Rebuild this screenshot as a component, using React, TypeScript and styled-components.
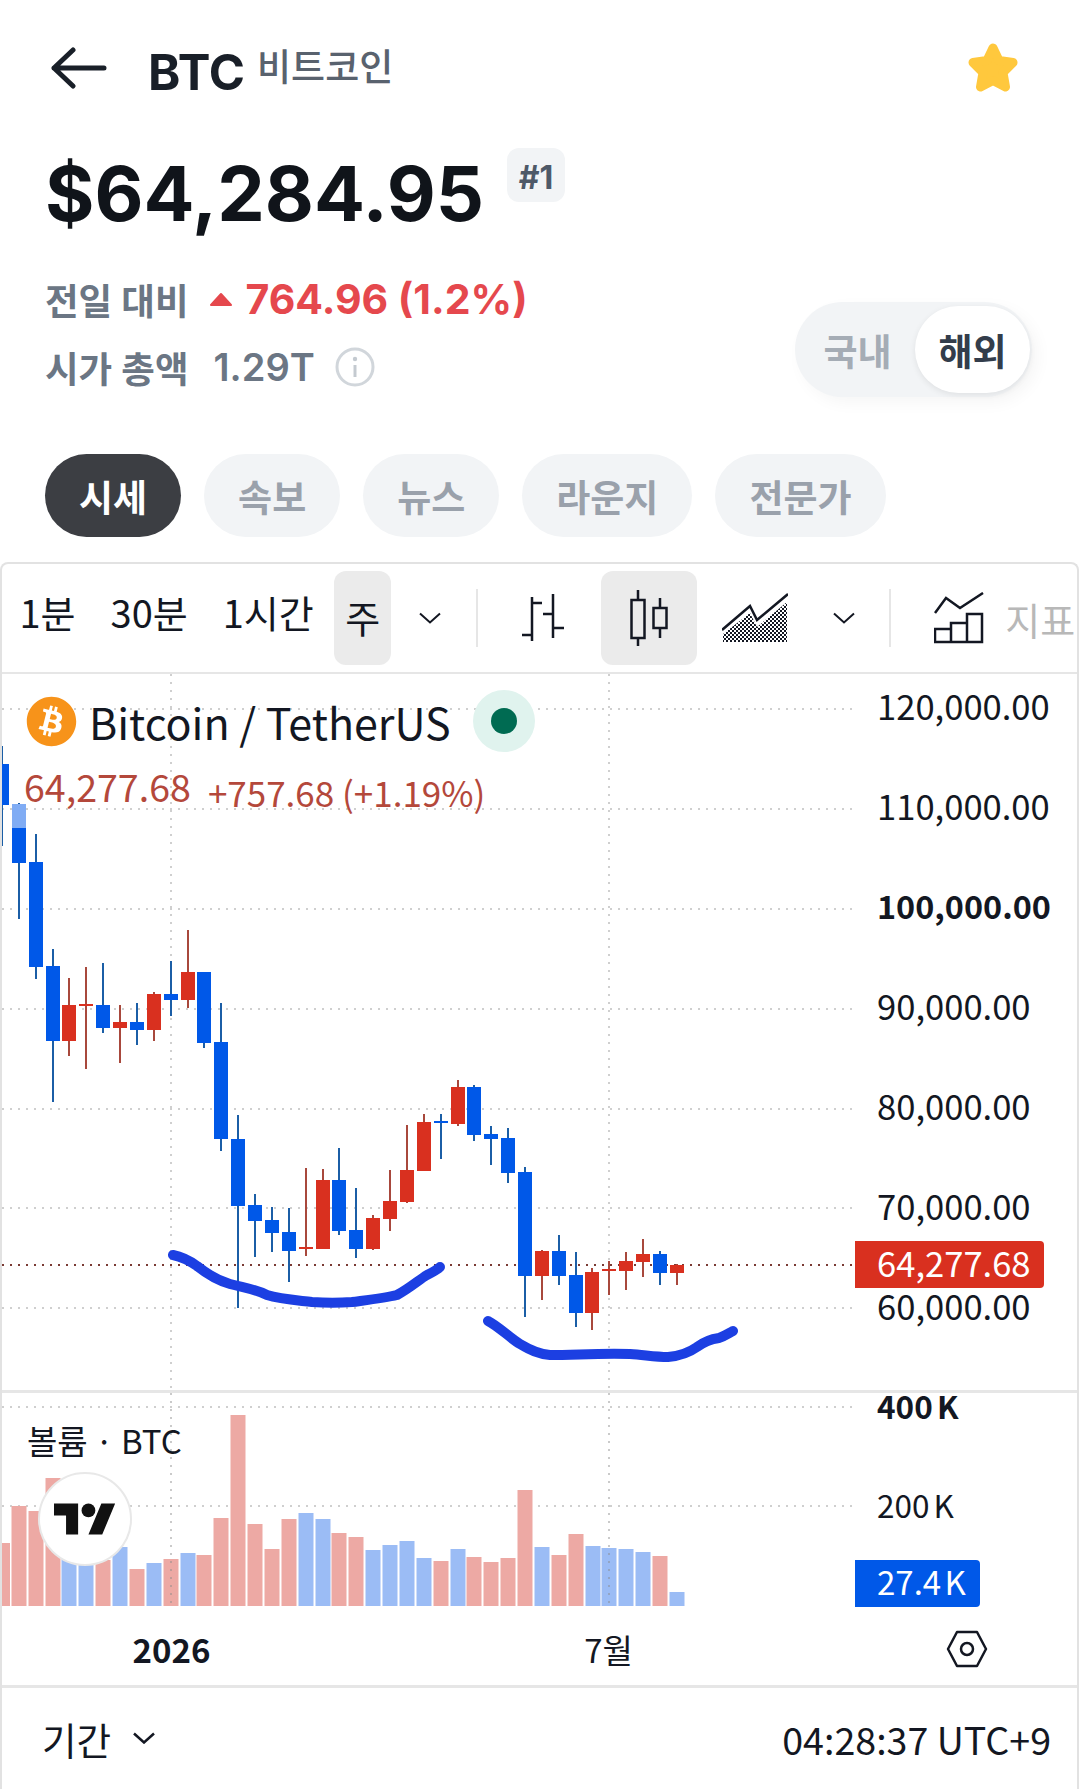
import React from 'react'
import styled, { createGlobalStyle } from 'styled-components'
import { FaBitcoin } from 'react-icons/fa'

const BLUE = '#0058e8'
const RED = '#d9301f'
const BLUE_WICK = '#1b5ea6'
const RED_WICK = '#a8483c'
const GRID = '#cfcfcf'

type Candle = [number, number, number, number, number, 'u' | 'd']

// x, high, body top, body bottom, low, direction
const candles: Candle[] = [
  [2, 746, 764, 805, 846, 'd'],
  [19, 803, 804, 863, 919, 'd'],
  [36, 834, 862, 967, 979, 'd'],
  [53, 949, 966, 1041, 1102, 'd'],
  [69, 978, 1005, 1041, 1056, 'u'],
  [86, 967, 1004, 1006, 1069, 'u'],
  [103, 963, 1005, 1028, 1033, 'd'],
  [120, 1005, 1022, 1028, 1063, 'u'],
  [137, 1003, 1022, 1030, 1045, 'd'],
  [154, 992, 994, 1030, 1041, 'u'],
  [171, 961, 994, 1000, 1016, 'd'],
  [188, 930, 972, 1000, 1008, 'u'],
  [204, 972, 972, 1043, 1048, 'd'],
  [221, 1003, 1042, 1139, 1151, 'd'],
  [238, 1115, 1139, 1206, 1308, 'd'],
  [255, 1194, 1205, 1221, 1257, 'd'],
  [272, 1207, 1220, 1233, 1252, 'd'],
  [289, 1208, 1232, 1251, 1282, 'd'],
  [306, 1168, 1247, 1249, 1256, 'u'],
  [323, 1169, 1180, 1249, 1249, 'u'],
  [339, 1148, 1180, 1231, 1235, 'd'],
  [356, 1188, 1230, 1249, 1258, 'd'],
  [373, 1215, 1218, 1249, 1250, 'u'],
  [390, 1170, 1201, 1219, 1231, 'u'],
  [407, 1125, 1170, 1202, 1203, 'u'],
  [424, 1114, 1122, 1171, 1171, 'u'],
  [441, 1114, 1121, 1123, 1159, 'd'],
  [458, 1080, 1087, 1124, 1126, 'u'],
  [474, 1085, 1087, 1135, 1141, 'd'],
  [491, 1126, 1134, 1139, 1165, 'd'],
  [508, 1128, 1138, 1173, 1183, 'd'],
  [525, 1167, 1172, 1276, 1317, 'd'],
  [542, 1250, 1251, 1276, 1300, 'u'],
  [559, 1235, 1251, 1276, 1285, 'd'],
  [576, 1252, 1275, 1313, 1327, 'd'],
  [592, 1268, 1272, 1313, 1330, 'u'],
  [609, 1261, 1269, 1271, 1295, 'u'],
  [626, 1252, 1261, 1271, 1290, 'u'],
  [643, 1239, 1254, 1262, 1277, 'u'],
  [660, 1251, 1254, 1273, 1285, 'd'],
  [677, 1264, 1265, 1273, 1285, 'u'],
]

// x, top of bar, direction
const volumes: [number, number, 'u' | 'd'][] = [
  [2.5, 1543, 'u'], [19, 1506, 'u'], [36, 1511, 'u'], [53, 1478, 'u'], [69, 1545, 'd'],
  [86, 1565, 'd'], [103, 1560, 'u'], [120, 1547, 'd'], [137, 1569, 'u'], [154, 1563, 'd'],
  [171, 1559, 'u'], [188, 1553, 'd'], [204, 1555, 'u'], [221, 1518, 'u'], [238, 1415, 'u'],
  [255, 1524, 'u'], [272, 1549, 'u'], [289, 1519, 'u'], [306, 1513, 'd'], [323, 1519, 'd'],
  [339, 1533, 'u'], [356, 1537, 'u'], [373, 1550, 'd'], [390, 1545, 'd'], [407, 1541, 'd'],
  [424, 1558, 'd'], [441, 1561, 'u'], [458, 1549, 'd'], [474, 1557, 'u'], [491, 1562, 'u'],
  [508, 1558, 'u'], [525, 1490, 'u'], [542, 1547, 'd'], [559, 1555, 'u'], [576, 1534, 'u'],
  [593, 1546, 'd'], [609, 1548, 'd'], [626, 1549, 'd'], [643, 1552, 'd'], [660, 1556, 'u'],
  [677, 1592, 'd'],
]

const priceTicks = ['120,000.00', '110,000.00', '100,000.00', '90,000.00', '80,000.00', '70,000.00', '60,000.00']

const GlobalStyle = createGlobalStyle`
  html, body {
    margin: 0;
    background: #fff;
  }
  body {
    font-family: Inter, "Noto Sans CJK KR", sans-serif;
    color: #191f28;
    overflow: hidden;
  }
`

const Page = styled.div`
  width: 1079px;
  height: 1789px;
  overflow: hidden;
`

const Header = styled.header`
  display: flex;
  align-items: center;
  height: 136px;
  padding: 0 60px 0 51px;
`

const Symbol = styled.span`
  margin-left: 41px;
  font-size: 49px;
  font-weight: 700;
  padding-top: 9px;
`

const CoinName = styled.span`
  margin-left: 12px;
  font-size: 37px;
  font-weight: 500;
  color: #59626e;
  padding-bottom: 6px;
`

const StarButton = styled.div`
  margin-left: auto;
  display: flex;
`

const PriceRow = styled.div`
  display: flex;
  align-items: flex-start;
  height: 100px;
  padding: 14px 0 0 45px;
  box-sizing: border-box;
`

const Price = styled.div`
  font-size: 75.5px;
  line-height: 88px;
  font-weight: 700;
  color: #10141a;
`

const RankBadge = styled.div`
  margin-left: 23px;
  margin-top: -2px;
  width: 58px;
  height: 54px;
  box-sizing: border-box;
  padding-top: 4px;
  border-radius: 12px;
  background: #f2f4f6;
  color: #4e5968;
  font-size: 32px;
  font-weight: 700;
  display: flex;
  align-items: center;
  justify-content: center;
`

const StatsRow = styled.div`
  display: flex;
  justify-content: space-between;
  align-items: flex-end;
  padding: 33px 47px 0 45px;
`

const Stats = styled.div`
  display: flex;
  flex-direction: column;
  gap: 8px;
`

const StatLine = styled.div`
  display: flex;
  align-items: center;
  height: 60px;
  font-size: 36.5px;
  font-weight: 600;
  color: #6b7684;
`

const Change = styled.span`
  margin-left: 13px;
  font-size: 41px;
  font-weight: 700;
  color: #e5484d;
`

const Cap = styled.span`
  margin-left: 25px;
  font-size: 38px;
  font-weight: 600;
`

const MarketToggle = styled.div`
  width: 237px;
  height: 95px;
  box-sizing: border-box;
  padding: 4px 2px 4px 5px;
  border-radius: 48px;
  background: #f2f4f6;
  box-shadow: 6px 6px 16px rgba(0, 0, 0, 0.04);
  display: flex;
  justify-content: space-between;
  align-items: center;
`

const ToggleOption = styled.div<{ $active?: boolean }>`
  width: 115px;
  height: 87px;
  border-radius: 44px;
  font-size: 37px;
  font-weight: 700;
  display: flex;
  align-items: center;
  justify-content: center;
  color: ${(p) => (p.$active ? '#333d4b' : '#a5acb5')};
  background: ${(p) => (p.$active ? '#fff' : 'transparent')};
  box-shadow: ${(p) => (p.$active ? '0 2px 6px rgba(0,0,0,.08)' : 'none')};
`

const Tabs = styled.nav`
  display: flex;
  gap: 23px;
  margin-top: 57px;
  padding-left: 45px;
`

const Tab = styled.div<{ $active?: boolean }>`
  height: 83px;
  padding: 0 34px;
  border-radius: 42px;
  display: flex;
  align-items: center;
  font-size: 37px;
  font-weight: 700;
  color: ${(p) => (p.$active ? '#fff' : '#9aa1ab')};
  background: ${(p) => (p.$active ? '#3c3e43' : '#f2f4f6')};
`

const ChartFrame = styled.section`
  margin-top: 25px;
  height: 1227px;
  box-sizing: border-box;
  border: 2px solid #e2e2e2;
  border-bottom: 0;
  border-radius: 8px 8px 0 0;
  font-family: "Noto Sans CJK KR", sans-serif;
  color: #131722;
`

const Toolbar = styled.div`
  display: flex;
  align-items: center;
  height: 108px;
  border-bottom: 2px solid #e6e6e6;
  overflow: hidden;
`

const Interval = styled.div`
  flex: none;
  padding: 0 17.5px 13px;
  font-size: 38px;
  white-space: nowrap;
`

const ActiveInterval = styled.div`
  flex: none;
  margin-left: 3px;
  width: 57px;
  height: 94px;
  box-sizing: border-box;
  padding-bottom: 3px;
  border-radius: 12px;
  background: #ebebeb;
  font-size: 38px;
  display: flex;
  align-items: center;
  justify-content: center;
`

const Caret = styled.svg<{ $left: number }>`
  margin-left: ${(p) => p.$left}px;
  flex: none;
`

const ToolSeparator = styled.div<{ $left: number }>`
  margin-left: ${(p) => p.$left}px;
  width: 2px;
  height: 58px;
  background: #e6e6e6;
  flex: none;
`

const ToolIcon = styled.div<{ $left: number; $active?: boolean }>`
  margin-left: ${(p) => p.$left}px;
  height: 94px;
  padding: ${(p) => (p.$active ? '0 28px' : '0')};
  border-radius: 12px;
  background: ${(p) => (p.$active ? '#ebebeb' : 'transparent')};
  display: flex;
  align-items: center;
  flex: none;
`

const IndicatorsLabel = styled.div`
  flex: none;
  margin-left: 21px;
  font-size: 38px;
  color: #b8b8b8;
  white-space: nowrap;
`

const Pane = styled.div<{ $height: number }>`
  display: flex;
  height: ${(p) => p.$height}px;
  position: relative;
`

const Plot = styled.div`
  position: relative;
  width: 851px;
  flex: none;
`

const PlotSvg = styled.svg`
  display: block;
`

const Axis = styled.div`
  flex: 1;
  padding: 13px 0 0 24px;
  display: flex;
  flex-direction: column;
  gap: 64px;
  font-size: 34.6px;
  line-height: 36px;
`

const Tick = styled.div<{ $strong?: boolean }>`
  font-weight: ${(p) => (p.$strong ? 700 : 400)};
  font-size: ${(p) => (p.$strong ? '32.4px' : 'inherit')};
  white-space: nowrap;
`

const VolumeAxis = styled(Axis)`
  padding-top: 0;
  gap: 75px;
  font-size: 31.5px;
  line-height: 24px;
  word-spacing: -3px;

  & > div {
    font-size: 31.5px;
  }
`

const Legend = styled.div`
  position: absolute;
  left: 24px;
  top: 16px;
`

const LegendTitle = styled.div`
  display: flex;
  align-items: center;
  height: 62px;
  font-size: 43px;
  white-space: nowrap;
`

const CoinLogo = styled.div`
  width: 51px;
  height: 51px;
  border-radius: 50%;
  background: #fff;
  display: flex;
  margin-right: 12px;
`

const StatusDot = styled.div`
  width: 62px;
  height: 62px;
  margin-left: 22px;
  border-radius: 50%;
  background: #e0f3ee;
  display: flex;
  align-items: center;
  justify-content: center;

  &::after {
    content: '';
    width: 26px;
    height: 26px;
    border-radius: 50%;
    background: #006b52;
  }
`

const LegendValues = styled.div`
  display: flex;
  align-items: flex-end;
  margin-top: 18px;
  color: #b4483b;
  white-space: nowrap;
  gap: 17px;
  font-size: 35px;
  line-height: 44px;
`

const LastPrice = styled.span`
  font-size: 37.6px;
  margin-left: -2px;
  position: relative;
  top: -6px;
`

const AxisPill = styled.div<{ $top: number; $width: number; $bg: string }>`
  position: absolute;
  left: 853px;
  top: ${(p) => p.$top}px;
  width: ${(p) => p.$width}px;
  height: 47px;
  box-sizing: border-box;
  padding-left: 22px;
  background: ${(p) => p.$bg};
  color: #fff;
  font-size: 34.6px;
  line-height: 42px;
  border-radius: 0 4px 4px 0;
  white-space: nowrap;
`

const VolumePill = styled(AxisPill)`
  font-size: 33px;
  word-spacing: -4px;
`

const PaneDivider = styled.div`
  height: 3px;
  background: #e6e6e6;
`

const VolumeLegend = styled.div`
  position: absolute;
  left: 25px;
  top: 24px;
  font-size: 33px;
  line-height: 46px;
  white-space: nowrap;
`

const BrandBadge = styled.div`
  position: absolute;
  left: 36px;
  top: 79px;
  width: 94px;
  height: 94px;
  box-sizing: border-box;
  border-radius: 50%;
  border: 2px solid #e8e8e8;
  background: #fff;
  display: flex;
  align-items: center;
  justify-content: center;
`

const TimeAxis = styled.div`
  display: grid;
  grid-template-columns: 339px 535px 1fr;
  align-items: center;
  height: 80px;
  box-sizing: border-box;
  padding-top: 4px;
  border-bottom: 3px solid #e6e6e6;
  font-size: 33px;
`

const TimeLabel = styled.div<{ $strong?: boolean }>`
  text-align: center;
  font-weight: ${(p) => (p.$strong ? 700 : 400)};
`

const SettingsCell = styled.div`
  display: flex;
  justify-content: center;
  padding-right: 20px;
`

const Footer = styled.footer`
  display: flex;
  align-items: center;
  justify-content: space-between;
  height: 100px;
  padding: 0 26px 0 40px;
  font-size: 37.6px;
`

const RangeSelect = styled.div`
  display: flex;
  align-items: center;
  gap: 22px;
`

function CandleSeries() {
  return (
    <>
      {candles.map(([x, high, top, bot, low, dir]) => (
        <g key={x}>
          <rect x={x - 1} y={high} width={2} height={low - high} fill={dir === 'u' ? RED_WICK : BLUE_WICK} />
          <rect x={x - 7} y={top} width={14} height={bot - top} fill={dir === 'u' ? RED : BLUE} />
        </g>
      ))}
    </>
  )
}

function PriceChart() {
  const gridY = [709, 809, 909, 1009, 1109, 1208, 1308]
  return (
    <PlotSvg width={851} height={716} viewBox="2 674 851 716">
      {gridY.map((y) => (
        <line key={y} x1={2} x2={853} y1={y} y2={y} stroke={GRID} strokeWidth={2} strokeDasharray="2 6" />
      ))}
      {[171, 609].map((x) => (
        <line key={x} x1={x} x2={x} y1={674} y2={1390} stroke={GRID} strokeWidth={2} strokeDasharray="2 6" />
      ))}
      <line x1={2} x2={853} y1={1265} y2={1265} stroke="#7a3a34" strokeWidth={2} strokeDasharray="2 6" />
      <CandleSeries />
      <rect x={12} y={804} width={14} height={24} fill="#fff" opacity={0.5} />
      <path
        d="M173 1255 C183 1257 190 1261 197 1266 C207 1274 216 1280 230 1284 C245 1288 255 1289 267 1295 C280 1299 295 1300 312 1302 C325 1303 340 1303 352 1302 C367 1300 385 1298 397 1295 C410 1288 420 1279 427 1275 C433 1272 437 1270 440 1267"
        fill="none"
        stroke="#1c3fe2"
        strokeWidth={10}
        strokeLinecap="round"
        strokeLinejoin="round"
      />
      <path
        d="M488 1321 C498 1326 510 1338 520 1344 C530 1350 538 1354 550 1355 C575 1355 600 1353 630 1354 C645 1355 655 1357 668 1357 C680 1356 690 1352 697 1347 C705 1341 712 1339 719 1338 C725 1336 729 1333 733 1331"
        fill="none"
        stroke="#1c3fe2"
        strokeWidth={10}
        strokeLinecap="round"
        strokeLinejoin="round"
      />
    </PlotSvg>
  )
}

function VolumeChart() {
  return (
    <PlotSvg width={851} height={215} viewBox="2 1393 851 215">
      {[1407, 1506].map((y) => (
        <line key={y} x1={2} x2={853} y1={y} y2={y} stroke={GRID} strokeWidth={2} strokeDasharray="2 6" />
      ))}
      {volumes.map(([x, top, dir]) => (
        <rect key={x} x={x - 7.5} y={top} width={15} height={1606 - top} fill={dir === 'u' ? '#eda9a4' : '#9bbcf5'} />
      ))}
      {[171, 609].map((x) => (
        <line key={x} x1={x} x2={x} y1={1393} y2={1606} stroke="#8a8a8a" strokeOpacity={0.45} strokeWidth={2} strokeDasharray="2 6" />
      ))}
    </PlotSvg>
  )
}

function ChevronIcon({ left }: { left: number }) {
  return (
    <Caret $left={left} width={22} height={12} viewBox="0 0 22 12" fill="none" stroke="#131722" strokeWidth={2}>
      <path d="M1 1.5 L11 10.5 L21 1.5" />
    </Caret>
  )
}

export default function App() {
  return (
    <Page>
      <GlobalStyle />
      <Header>
        <svg width={56} height={42} viewBox="0 0 56 42" fill="none" stroke="#191f28" strokeWidth={5} strokeLinecap="round" strokeLinejoin="round">
          <path d="M3 21 H53 M22 3 L3 21 L22 39" />
        </svg>
        <Symbol>BTC</Symbol>
        <CoinName>비트코인</CoinName>
        <StarButton>
          <svg width={52} height={52} viewBox="0 0 52 52">
            <path
              d="M26 6 L32 18.5 L46 20.5 L36 30.5 L38.5 45 L26 38.5 L13.5 45 L16 30.5 L6 20.5 L20 18.5 Z"
              fill="#ffc83d"
              stroke="#ffc83d"
              strokeWidth={9}
              strokeLinejoin="round"
            />
          </svg>
        </StarButton>
      </Header>

      <PriceRow>
        <Price>$64,284.95</Price>
        <RankBadge>#1</RankBadge>
      </PriceRow>

      <StatsRow>
        <Stats>
          <StatLine>
            전일 대비
            <svg width={24} height={15} viewBox="0 0 24 15" style={{ marginLeft: 20 }}>
              <path d="M12 2 L22 13 H2 Z" fill="#e5484d" stroke="#e5484d" strokeWidth={2} strokeLinejoin="round" />
            </svg>
            <Change>764.96 (1.2%)</Change>
          </StatLine>
          <StatLine>
            시가 총액
            <Cap>1.29T</Cap>
            <svg width={40} height={40} viewBox="0 0 40 40" fill="none" style={{ marginLeft: 20 }}>
              <circle cx={20} cy={20} r={18} stroke="#d1d6db" strokeWidth={3} />
              <circle cx={20} cy={12} r={2.2} fill="#c4cad0" />
              <path d="M20 18 V30" stroke="#c4cad0" strokeWidth={3} />
            </svg>
          </StatLine>
        </Stats>
        <MarketToggle>
          <ToggleOption>국내</ToggleOption>
          <ToggleOption $active>해외</ToggleOption>
        </MarketToggle>
      </StatsRow>

      <Tabs>
        <Tab $active>시세</Tab>
        <Tab>속보</Tab>
        <Tab>뉴스</Tab>
        <Tab>라운지</Tab>
        <Tab>전문가</Tab>
      </Tabs>

      <ChartFrame>
        <Toolbar>
          <Interval>1분</Interval>
          <Interval>30분</Interval>
          <Interval>1시간</Interval>
          <ActiveInterval>주</ActiveInterval>
          <ChevronIcon left={28} />
          <ToolSeparator $left={35} />
          <ToolIcon $left={44}>
            <svg width={42} height={48} viewBox="523 595 42 48" fill="none" stroke="#131722" strokeWidth={2.5}>
              <path d="M533 598 V642 M523 636 H533 M533 604 H543 M554 595 V639 M544 615 H554 M554 629 H565" />
            </svg>
          </ToolIcon>
          <ToolIcon $left={37} $active>
            <svg width={40} height={58} viewBox="631 588 40 58" fill="none" stroke="#131722" strokeWidth={2.5}>
              <path d="M640 589 V599 M640 637 V645 M662 597 V607 M662 627 V637" />
              <rect x={633.5} y={599} width={13} height={38} />
              <rect x={655.5} y={607} width={13} height={20} />
            </svg>
          </ToolIcon>
          <ToolIcon $left={25}>
            <svg width={66} height={50} viewBox="722 591 66 50">
              <defs>
                <pattern id="areaDots" width={4} height={4} patternUnits="userSpaceOnUse">
                  <rect width={2} height={2} fill="#131722" />
                  <rect x={2} y={2} width={2} height={2} fill="#131722" />
                </pattern>
              </defs>
              <path d="M723 640 V632 L750 611 L757 625 L787 600 V640 Z" fill="url(#areaDots)" />
              <path d="M722 628 L750 604 L757 618 L788 592" fill="none" stroke="#131722" strokeWidth={2.5} />
            </svg>
          </ToolIcon>
          <ChevronIcon left={45} />
          <ToolSeparator $left={34} />
          <ToolIcon $left={43}>
            <svg width={50} height={52} viewBox="934 591 50 52" fill="none" stroke="#131722" strokeWidth={2.5}>
              <path d="M935 612 L946 597 L960 607 L983 592" />
              <path d="M935 641 V628 H951 V622 H967 V613 H982 V641 Z M951 628 V641 M967 622 V641" />
            </svg>
          </ToolIcon>
          <IndicatorsLabel>지표</IndicatorsLabel>
        </Toolbar>

        <Pane $height={716}>
          <Plot>
            <PriceChart />
            <Legend>
              <LegendTitle>
                <CoinLogo>
                  <FaBitcoin size={51} color="#f7931a" />
                </CoinLogo>
                Bitcoin / TetherUS
                <StatusDot />
              </LegendTitle>
              <LegendValues>
                <LastPrice>64,277.68</LastPrice>
                <span>+757.68 (+1.19%)</span>
              </LegendValues>
            </Legend>
          </Plot>
          <Axis>
            {priceTicks.map((t) => (
              <Tick key={t} $strong={t === '100,000.00'}>
                {t}
              </Tick>
            ))}
          </Axis>
          <AxisPill $top={567} $width={189} $bg="#d9301f">
            64,277.68
          </AxisPill>
        </Pane>

        <PaneDivider />

        <Pane $height={215}>
          <Plot>
            <VolumeChart />
            <VolumeLegend>볼륨 · BTC</VolumeLegend>
            <BrandBadge>
              <svg width={62} height={32} viewBox="0 4 36 18" fill="#111">
                <path d="M14 22H7V11H0V4h14v18zM28 22h-8l7.5-18h8L28 22z" />
                <circle cx={20} cy={8} r={4} />
              </svg>
            </BrandBadge>
          </Plot>
          <VolumeAxis>
            <Tick $strong>400 K</Tick>
            <Tick>200 K</Tick>
          </VolumeAxis>
          <VolumePill $top={167} $width={125} $bg="#0058e8">
            27.4 K
          </VolumePill>
        </Pane>

        <TimeAxis>
          <TimeLabel $strong>2026</TimeLabel>
          <TimeLabel>7월</TimeLabel>
          <SettingsCell>
            <svg width={42} height={38} viewBox="0 0 42 38" fill="none" stroke="#131722" strokeWidth={2.5}>
              <path d="M11 2 H31 L40 19 L31 36 H11 L2 19 Z" strokeLinejoin="round" />
              <circle cx={21} cy={19} r={6} />
            </svg>
          </SettingsCell>
        </TimeAxis>

        <Footer>
          <RangeSelect>
            기간
            <svg width={22} height={12} viewBox="0 0 22 12" fill="none" stroke="#131722" strokeWidth={2.5}>
              <path d="M1 1.5 L11 10.5 L21 1.5" />
            </svg>
          </RangeSelect>
          <span>04:28:37 UTC+9</span>
        </Footer>
      </ChartFrame>
    </Page>
  )
}
